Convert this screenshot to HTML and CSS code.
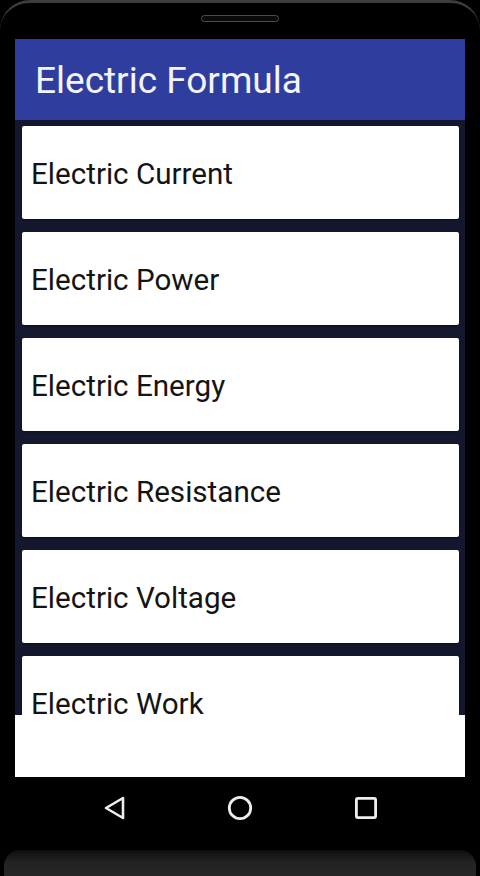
FILE: index.html
```html
<!DOCTYPE html>
<html>
<head>
<meta charset="utf-8">
<link rel="stylesheet" href="styles.css">
</head>
<body>
<div class="phone">
  <div class="top">
    <div class="speaker"></div>
  </div>
  <div class="screen">
    <div class="appbar">Electric Formula</div>
    <div class="list">
      <div class="card">Electric Current</div>
      <div class="card">Electric Power</div>
      <div class="card">Electric Energy</div>
      <div class="card">Electric Resistance</div>
      <div class="card">Electric Voltage</div>
      <div class="card">Electric Work</div>
    </div>
    <div class="footer"></div>
  </div>
  <div class="nav">
    <svg class="navicon" width="24" height="24" viewBox="0 0 24 24"><path d="M21 2 L4 12 L21 22 Z" fill="none" stroke="#eeeeee" stroke-width="2.6" stroke-linejoin="round"/></svg>
    <svg class="navicon" width="26" height="26" viewBox="0 0 26 26"><circle cx="13" cy="13" r="10.7" fill="none" stroke="#eeeeee" stroke-width="2.8"/></svg>
    <svg class="navicon" width="24" height="24" viewBox="0 0 24 24"><rect x="2.4" y="2.4" width="19.2" height="19.2" rx="1.5" fill="none" stroke="#eeeeee" stroke-width="2.8"/></svg>
  </div>
  <div class="chin"></div>
</div>
</body>
</html>
```
FILE: styles.css
```css
html, body {
  margin: 0;
  padding: 0;
  background: #000;
}
.phone {
  width: 480px;
  height: 876px;
  background: #000;
  display: flex;
  flex-direction: column;
  box-sizing: border-box;
  border-top: 3px solid #3c3c3c;
  border-radius: 30px 30px 0 0;
  overflow: hidden;
  font-family: Roboto, "Liberation Sans", sans-serif;
}
.top {
  height: 36px;
  display: flex;
  justify-content: center;
  padding-top: 12px;
  box-sizing: border-box;
}
.speaker {
  width: 78px;
  height: 7px;
  border: 1.5px solid #4d4d4d;
  border-radius: 5px;
  box-sizing: border-box;
  background: #0a0a0a;
}
.screen {
  margin: 0 15px;
  height: 738px;
  display: flex;
  flex-direction: column;
  background: #171a33;
}
.appbar {
  height: 81px;
  flex: none;
  background: #2f3e9e;
  color: #f4f4f8;
  font-size: 37px;
  display: flex;
  align-items: center;
  padding-left: 20px;
  padding-top: 2px;
  box-sizing: border-box;
}
.list {
  flex: 1;
  min-height: 0;
  padding: 6px 6px 0 7px;
  display: flex;
  flex-direction: column;
  gap: 13px;
  background: #15172e;
}
.card {
  flex: none;
  height: 93px;
  background: #fff;
  border-radius: 2px;
  color: #141414;
  font-size: 29.6px;
  line-height: 27px;
  display: flex;
  align-items: center;
  padding-left: 9px;
  padding-top: 4px;
  box-sizing: border-box;
  box-shadow: 0 1px 2px rgba(0,0,0,0.4);
}
.footer {
  height: 62px;
  flex: none;
  background: #fff;
}
.nav {
  height: 73px;
  flex: none;
  display: flex;
  justify-content: center;
  align-items: center;
  gap: 101px;
  padding-bottom: 12px;
  box-sizing: border-box;
}
.chin {
  flex: 1;
  margin: 0 4px;
  border-radius: 16px 16px 0 0;
  background: linear-gradient(#0e0e0e, #232323 50%, #262626);
}
```
